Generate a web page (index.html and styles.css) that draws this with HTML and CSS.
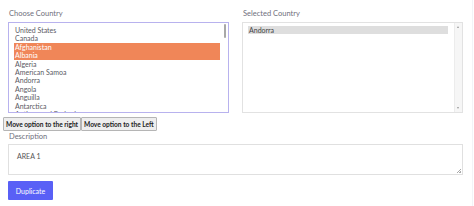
FILE: index.html
```html
<!DOCTYPE html>
<html>
<head>
<meta charset="utf-8">
<link rel="stylesheet" href="styles.css">
</head>
<body>
<div class="page">
  <div class="cols">
    <div class="col">
      <div class="label">Choose Country</div>
      <div class="listbox focused">
        <div class="options">
          <div class="opt">United States</div>
          <div class="opt">Canada</div>
          <div class="opt sel">Afghanistan</div>
          <div class="opt sel">Albania</div>
          <div class="opt">Algeria</div>
          <div class="opt">American Samoa</div>
          <div class="opt">Andorra</div>
          <div class="opt">Angola</div>
          <div class="opt">Anguilla</div>
          <div class="opt">Antarctica</div>
          <div class="opt">Antigua and Barbuda</div>
        </div>
        <div class="thin-scroll"><div class="thumb"></div></div>
      </div>
    </div>
    <div class="col">
      <div class="label">Selected Country</div>
      <div class="listbox">
        <div class="options">
          <div class="opt gray">Andorra</div>
        </div>
        <div class="scroll">
          <span class="arrow up"></span>
          <span class="arrow down"></span>
        </div>
      </div>
    </div>
  </div>
  <div class="btns">
    <button class="btn">Move option to the right</button><button class="btn">Move option to the Left</button>
  </div>
  <div class="field">
    <div class="label desc">Description</div>
    <div class="textarea">AREA 1<span class="grip"></span></div>
    <button class="dup">Duplicate</button>
  </div>
</div>
<div class="edge"></div>
</body>
</html>
```
FILE: styles.css
```css
html, body { margin: 0; padding: 0; background: #fff; }
body { font-family: Lato, "Open Sans", sans-serif; width: 474px; height: 206px; overflow: hidden; position: relative; }
.page { padding: 9px 11px 0 3px; }
.cols { display: grid; grid-template-columns: 221px 221px; column-gap: 13px; padding-left: 5px; }
.label { font-size: 7.5px; color: #6f6f7c; height: 13px; line-height: 10px; padding-left: 1px; }
.listbox { position: relative; height: 91px; box-sizing: border-box; border: 1px solid #e2e2e2; overflow: hidden; }
.listbox.focused { border: 1px solid #b8b2ee; }
.options { padding: 3px 8px 0 5px; }
.opt { font-size: 7px; line-height: 8.4px; height: 8.4px; color: #5a5a64; padding-left: 1px; white-space: nowrap; }
.opt.sel { background: #f08658; color: #fff; }
.opt.gray { background: #dedede; color: #444; margin-right: 6px; }
.thin-scroll { position: absolute; right: 2px; top: 1px; width: 2px; height: 88px; }
.thumb { width: 2px; height: 14px; background: #a8a8a8; border-radius: 1px; }
.scroll { position: absolute; right: 0; top: 0; width: 7px; height: 89px; background: #f6f6f6; border-left: 1px solid #ececec; }
.arrow { position: absolute; left: 2px; width: 0; height: 0; border-left: 1.5px solid transparent; border-right: 1.5px solid transparent; }
.arrow.up { top: 3px; border-bottom: 2px solid #999; }
.arrow.down { bottom: 3px; border-top: 2px solid #999; }
.btns { display: flex; margin-top: 4px; height: 14px; }
.btn { font-family: Lato, "Open Sans", sans-serif; font-size: 6.6px; font-weight: 700; color: #222; background: #eeeeee; border: 1px solid #b5b5b5; border-radius: 1px; padding: 0 2px; height: 14px; margin: 0; }
.field { padding-left: 5px; }
.label.desc { margin-top: 1px; height: 12px; }
.textarea { position: relative; box-sizing: border-box; height: 31px; width: 455px; border: 1px solid #e0e0e0; font-size: 7px; color: #555; padding: 7px 8px; }
.grip { position: absolute; right: 1px; bottom: 1px; width: 4px; height: 4px; background: linear-gradient(135deg, transparent 50%, #aaa 50%, #aaa 60%, transparent 60%, transparent 75%, #aaa 75%); }
.dup { display: block; margin-top: 6px; width: 45px; height: 19px; background: #5960f6; color: #fff; border: none; border-radius: 1px; font-family: Lato, "Open Sans", sans-serif; font-size: 7px; padding: 0; }
.edge { position: absolute; left: 472px; top: 0; width: 1px; height: 206px; background: #f3f3f7; }
```
